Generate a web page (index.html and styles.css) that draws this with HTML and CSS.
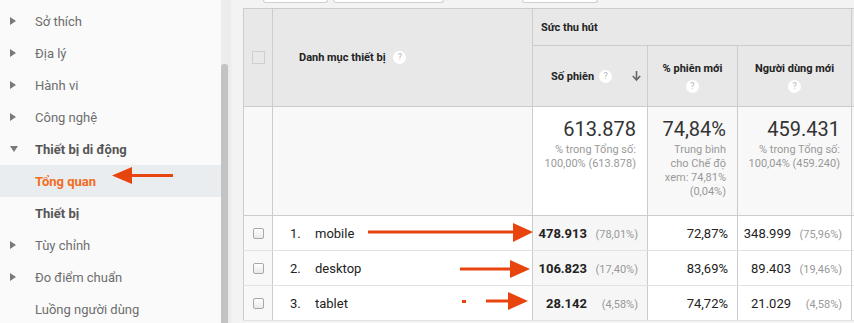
FILE: index.html
```html
<!DOCTYPE html>
<html lang="vi">
<head>
  <meta charset="UTF-8" />
  <title>Tổng quan thiết bị di động</title>
  <link rel="stylesheet" href="styles.css">
</head>
<body>
  <aside class="sidebar">
    <ul class="nav">
      <li><span class="caret"></span>Sở thích</li>
      <li><span class="caret"></span>Địa lý</li>
      <li><span class="caret"></span>Hành vi</li>
      <li><span class="caret"></span>Công nghệ</li>
      <li class="open"><span class="caret down"></span>Thiết bị di động</li>
      <li class="sub active"><span class="caret none"></span>Tổng quan</li>
      <li class="sub"><span class="caret none"></span>Thiết bị</li>
      <li><span class="caret"></span>Tùy chỉnh</li>
      <li><span class="caret"></span>Đo điểm chuẩn</li>
      <li><span class="caret none"></span>Luồng người dùng</li>
    </ul>
  </aside>
  <div class="scrollbar"><div class="thumb"></div></div>

  <main class="report">
    <div class="toolbar">
      <span class="btn btn-a"></span>
      <span class="btn btn-b"></span>
      <span class="btn btn-c"></span>
    </div>

    <table class="explorer">
      <colgroup>
        <col style="width:29px">
        <col style="width:260px">
        <col style="width:115px">
        <col style="width:90px">
        <col style="width:114px">
        <col style="width:40px">
      </colgroup>
      <thead>
        <tr class="group-row">
          <th rowspan="2" class="cb-cell"><span class="cb-head"></span></th>
          <th rowspan="2" class="dim-head">Danh mục thiết bị <i class="help">?</i></th>
          <th colspan="3" class="group">Sức thu hút</th>
          <th rowspan="2" class="extra"></th>
        </tr>
        <tr class="metric-row">
          <th class="sorted-head">
            <div class="sorted-inner">
              <span>Số phiên</span>
              <i class="help">?</i>
              <svg class="sort-arrow" width="9" height="10" viewBox="0 0 9 10"><path d="M4.5 0v8M0.8 5l3.7 4 3.7-4" fill="none" stroke="#666" stroke-width="1.6"/></svg>
            </div>
          </th>
          <th class="metric-head">% phiên mới<br><i class="help">?</i></th>
          <th class="metric-head">Người dùng mới<br><i class="help">?</i></th>
        </tr>
      </thead>
      <tbody>
        <tr class="summary">
          <td class="cb-cell"></td>
          <td class="dim"></td>
          <td class="sum sorted">
            <div class="big">613.878</div>
            <div class="note">% trong Tổng số:<br>100,00% (613.878)</div>
          </td>
          <td class="sum">
            <div class="big">74,84%</div>
            <div class="note">Trung bình<br>cho Chế độ<br>xem: 74,81%<br>(0,04%)</div>
          </td>
          <td class="sum">
            <div class="big">459.431</div>
            <div class="note">% trong Tổng số:<br>100,04% (459.240)</div>
          </td>
          <td class="extra"></td>
        </tr>
        <tr class="data">
          <td class="cb-cell"><span class="cb"></span></td>
          <td class="dim"><span class="idx">1.</span>mobile</td>
          <td class="num sorted"><b>478.913</b><span class="pct">(78,01%)</span></td>
          <td class="num">72,87%</td>
          <td class="num">348.999<span class="pct">(75,96%)</span></td>
          <td class="extra"></td>
        </tr>
        <tr class="data">
          <td class="cb-cell"><span class="cb"></span></td>
          <td class="dim"><span class="idx">2.</span>desktop</td>
          <td class="num sorted"><b>106.823</b><span class="pct">(17,40%)</span></td>
          <td class="num">83,69%</td>
          <td class="num">89.403<span class="pct">(19,46%)</span></td>
          <td class="extra"></td>
        </tr>
        <tr class="data">
          <td class="cb-cell"><span class="cb"></span></td>
          <td class="dim"><span class="idx">3.</span>tablet</td>
          <td class="num sorted"><b>28.142</b><span class="pct">(4,58%)</span></td>
          <td class="num">74,72%</td>
          <td class="num">21.029<span class="pct">(4,58%)</span></td>
          <td class="extra"></td>
        </tr>
      </tbody>
    </table>
  </main>

  <!-- hand-drawn annotation arrows over the screenshot -->
  <svg class="annotations" width="854" height="323" viewBox="0 0 854 323">
    <g fill="#e8440e" stroke="#e8440e">
      <line x1="173" y1="175.5" x2="130" y2="175.5" stroke-width="3"/>
      <polygon points="112,175.5 132,167 132,184" stroke="none"/>

      <line x1="368" y1="232" x2="515" y2="232" stroke-width="3"/>
      <polygon points="533,232 513,223 513,242" stroke="none"/>

      <line x1="460" y1="269" x2="512" y2="269" stroke-width="3"/>
      <polygon points="530,269 510,260 510,278" stroke="none"/>

      <rect x="462" y="300" width="4" height="3" stroke="none"/>
      <line x1="486" y1="301" x2="510" y2="301" stroke-width="3"/>
      <polygon points="528,301 508,292 508,310" stroke="none"/>
    </g>
  </svg>
</body>
</html>
```

FILE: styles.css
```css
* {
  margin: 0;
  padding: 0;
  box-sizing: border-box;
}

body {
  display: flex;
  height: 323px;
  overflow: hidden;
  font-family: Roboto, "Liberation Sans", Arial, sans-serif;
  background: #f3f3f3;
  position: relative;
}

/* left navigation */

.sidebar {
  width: 221px;
  flex: none;
  background: #fafafa;
  padding-top: 5px;
}

.nav li {
  list-style: none;
  height: 32px;
  display: flex;
  align-items: center;
  font-size: 13px;
  color: #6e6e6e;
}

.caret {
  width: 35px;
  height: 8px;
  flex: none;
  position: relative;
}

.caret::before {
  content: "";
  position: absolute;
  left: 10px;
  top: 0;
  border-left: 6px solid #7a7a7a;
  border-top: 4px solid transparent;
  border-bottom: 4px solid transparent;
}

.caret.down::before {
  top: 1px;
  border-left: 4px solid transparent;
  border-right: 4px solid transparent;
  border-top: 6px solid #7a7a7a;
  border-bottom: 0;
}

.caret.none::before {
  display: none;
}

.nav li.open,
.nav li.sub {
  font-weight: bold;
  color: #555;
}

.nav li.active {
  background: #eaedf0;
  color: #f36c21;
}

.scrollbar {
  width: 7px;
  flex: none;
  background: #ededed;
}

.scrollbar .thumb {
  margin-top: 64px;
  height: 259px;
  background: #c3c3c3;
  border-radius: 3px 3px 0 0;
}

/* report area */

.report {
  flex: 1;
  min-width: 0;
  overflow: hidden;
  padding-left: 15px;
  background: linear-gradient(to right, #e9e9e9, #f3f3f3 5px);
}

.toolbar {
  height: 8px;
  display: flex;
  align-items: flex-start;
}

.btn {
  height: 3px;
  background: #fff;
  border: 1px solid #cfcfcf;
  border-top: 0;
  border-radius: 0 0 4px 4px;
}

.btn-a { margin-left: 20px; width: 65px; }
.btn-b { margin-left: 5px; width: 111px; }
.btn-c { margin-left: 78px; width: 76px; }

.explorer {
  border-collapse: collapse;
  table-layout: fixed;
  width: 648px;
  font-size: 13px;
  color: #222;
}

.explorer th,
.explorer td {
  border: 1px solid #cccccc;
}

.explorer thead th {
  background: #e8e8e8;
  font-size: 11px;
  font-weight: bold;
  color: #222;
}

.group-row {
  height: 37px;
}

.metric-row {
  height: 61px;
}

.group {
  text-align: left;
  padding-left: 8px;
}

.dim-head {
  text-align: left;
  padding-left: 26px;
}

.cb-head {
  display: block;
  width: 13px;
  height: 13px;
  margin: 0 auto;
  border: 1px solid #cfcfcf;
}

.help {
  display: inline-block;
  width: 13px;
  height: 13px;
  line-height: 13px;
  border-radius: 50%;
  background: #fff;
  color: #b5b5b5;
  font-style: normal;
  font-weight: normal;
  font-size: 9px;
  text-align: center;
  vertical-align: middle;
  margin-left: 5px;
}

.sorted-inner {
  display: flex;
  align-items: center;
  padding-left: 18px;
}

.sort-arrow {
  margin-left: 20px;
}

.metric-head {
  text-align: center;
  line-height: 16px;
  padding-top: 2px;
}

.metric-head .help {
  margin: 2px 0 0;
}

/* body rows */

.summary {
  height: 109px;
}

.summary td {
  background: #f8f8f8;
}

.summary td.sorted {
  background: #fff;
}

.sum {
  vertical-align: top;
  text-align: right;
  padding: 11px 11px 0 4px;
}

.big {
  font-size: 20px;
  line-height: 22px;
  color: #333;
}

.note {
  font-size: 11px;
  line-height: 14px;
  color: #999;
  margin-top: 3px;
}

.data {
  height: 35px;
}

.data td {
  border-top-color: #e2e2e2;
  border-bottom-color: #e2e2e2;
  background: #fff;
}

.data td.cb-cell {
  background: #f8f8f8;
}

.data td.sorted {
  background: #f6f6f6;
}

.cb {
  display: block;
  width: 11px;
  height: 11px;
  margin: 0 auto;
  border: 1px solid #a8a8a8;
  border-radius: 2px;
  background: linear-gradient(#ffffff, #e9e9e9);
}

.dim {
  padding-left: 17px;
}

.idx {
  display: inline-block;
  width: 25px;
}

.num {
  text-align: right;
  padding-right: 9px;
}

.pct {
  display: inline-block;
  width: 51px;
  text-align: right;
  font-size: 11px;
  color: #999;
}

.extra {
  background: #f8f8f8;
}

.annotations {
  position: absolute;
  left: 0;
  top: 0;
  pointer-events: none;
}
```
